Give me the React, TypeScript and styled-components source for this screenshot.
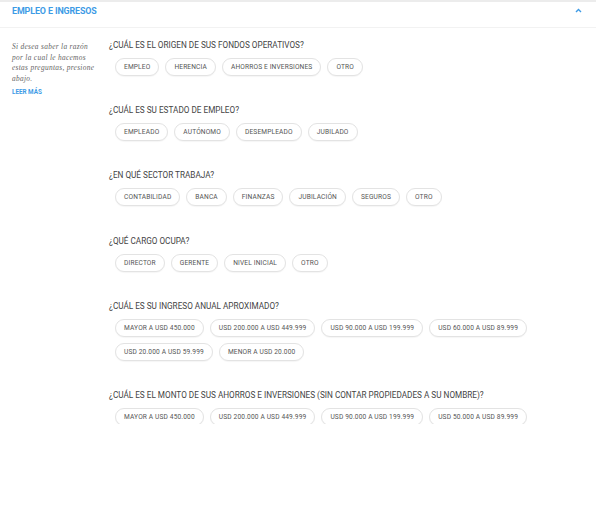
import React from "react";
import styled, { createGlobalStyle } from "styled-components";

const Global = createGlobalStyle`
  html, body { margin: 0; padding: 0; background: #fff; }
  * { box-sizing: border-box; }
`;

const Panel = styled.div`
  width: 596px;
  border-top: 2px solid #ececec;
  font-family: Roboto, "Liberation Sans", sans-serif;
`;

const Header = styled.div`
  height: 26px;
  padding: 3px 14px 0 12px;
  display: flex;
  align-items: flex-start;
  justify-content: space-between;
  border-bottom: 1px solid #f2f2f2;
`;

const Title = styled.h2`
  margin: 0;
  font-size: 8.9px;
  line-height: 12px;
  font-weight: 700;
  color: #3e9be6;
  letter-spacing: -0.1px;
`;

const ChevronBox = styled.span`
  display: flex;
  margin-top: 3px;
`;

const Body = styled.div`
  display: flex;
  height: 396px;
  overflow: hidden;
`;

const Side = styled.aside`
  width: 109px;
  flex: none;
  padding: 14px 12px 0 12px;
`;

const SideText = styled.p`
  margin: 0;
  font-family: "Liberation Serif", "DejaVu Serif", serif;
  font-style: italic;
  font-size: 7.4px;
  line-height: 10.7px;
  letter-spacing: 0.3px;
  color: #666;
`;

const More = styled.a`
  display: block;
  margin-top: 3px;
  font-size: 6.3px;
  font-weight: 700;
  color: #3e9be6;
  text-decoration: none;
`;

const Main = styled.main`
  flex: 1;
  padding-top: 12px;
`;

const Section = styled.section`
  margin-bottom: 29.2px;
`;

const Question = styled.h3`
  margin: 0 0 8px;
  font-size: 8.2px;
  line-height: 10px;
  font-weight: 400;
  color: #444;
`;

const Pills = styled.div`
  display: flex;
  flex-wrap: wrap;
  gap: 6px 6px;
  padding-left: 6px;
  max-width: 440px;
`;

const Pill = styled.button`
  height: 18px;
  padding: 0 8px;
  border: 1px solid #e3e3e3;
  border-radius: 9px;
  background: #fff;
  box-shadow: 0 1px 1px rgba(0, 0, 0, 0.04);
  font-family: Roboto, "Liberation Sans", sans-serif;
  font-size: 6.6px;
  letter-spacing: 0.15px;
  color: #555;
  cursor: pointer;
`;

const Chevron = () => (
  <ChevronBox>
    <svg width="7" height="5" viewBox="0 0 7 5">
      <polyline points="1,4 3.5,1.5 6,4" fill="none" stroke="#3e9be6" strokeWidth="1.4" />
    </svg>
  </ChevronBox>
);

const sections: { q: string; opts: string[] }[] = [
  { q: "¿CUÁL ES EL ORIGEN DE SUS FONDOS OPERATIVOS?", opts: ["EMPLEO", "HERENCIA", "AHORROS E INVERSIONES", "OTRO"] },
  { q: "¿CUÁL ES SU ESTADO DE EMPLEO?", opts: ["EMPLEADO", "AUTÓNOMO", "DESEMPLEADO", "JUBILADO"] },
  { q: "¿EN QUÉ SECTOR TRABAJA?", opts: ["CONTABILIDAD", "BANCA", "FINANZAS", "JUBILACIÓN", "SEGUROS", "OTRO"] },
  { q: "¿QUÉ CARGO OCUPA?", opts: ["DIRECTOR", "GERENTE", "NIVEL INICIAL", "OTRO"] },
  {
    q: "¿CUÁL ES SU INGRESO ANUAL APROXIMADO?",
    opts: ["MAYOR A USD 450.000", "USD 200.000 A USD 449.999", "USD 90.000 A USD 199.999", "USD 60.000 A USD 89.999", "USD 20.000 A USD 59.999", "MENOR A USD 20.000"],
  },
  {
    q: "¿CUÁL ES EL MONTO DE SUS AHORROS E INVERSIONES (SIN CONTAR PROPIEDADES A SU NOMBRE)?",
    opts: ["MAYOR A USD 450.000", "USD 200.000 A USD 449.999", "USD 90.000 A USD 199.999", "USD 50.000 A USD 89.999", "USD 20.000 A USD 49.999", "MENOR A USD 20.000"],
  },
];

export default function App() {
  return (
    <>
      <Global />
      <Panel>
        <Header>
          <Title>EMPLEO E INGRESOS</Title>
          <Chevron />
        </Header>
        <Body>
          <Side>
            <SideText>Si desea saber la razón por la cual le hacemos estas preguntas, presione abajo.</SideText>
            <More href="#">LEER MÁS</More>
          </Side>
          <Main>
            {sections.map((s) => (
              <Section key={s.q}>
                <Question>{s.q}</Question>
                <Pills>
                  {s.opts.map((o) => (
                    <Pill key={o}>{o}</Pill>
                  ))}
                </Pills>
              </Section>
            ))}
          </Main>
        </Body>
      </Panel>
    </>
  );
}
